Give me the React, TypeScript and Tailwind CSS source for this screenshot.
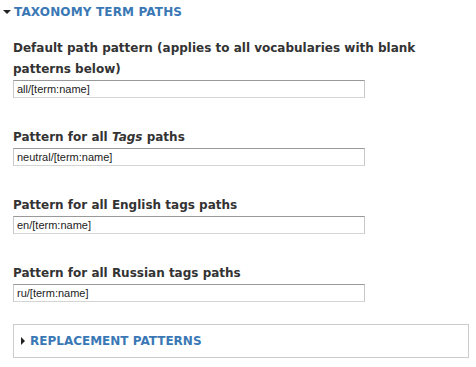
import React from 'react';

const fields = [
  { id: 'default', label: <>Default path pattern (applies to all vocabularies with blank patterns below)</>, value: 'all/[term:name]' },
  { id: 'tags', label: <>Pattern for all <em>Tags</em> paths</>, value: 'neutral/[term:name]' },
  { id: 'en', label: <>Pattern for all English tags paths</>, value: 'en/[term:name]' },
  { id: 'ru', label: <>Pattern for all Russian tags paths</>, value: 'ru/[term:name]' },
];

export default function App() {
  return (
    <div className="w-[476px] h-[367px] bg-white overflow-hidden font-['DejaVu_Sans',sans-serif]">
      {/* Legend */}
      <div className="flex items-center h-[24px] pl-[3px]">
        <span className="w-0 h-0 border-l-[4px] border-r-[4px] border-t-[4px] border-l-transparent border-r-transparent border-t-[#222] mr-[3px]" />
        <span className="text-[12px] font-bold text-[#3a78b5] tracking-[0.15px]">TAXONOMY TERM PATHS</span>
      </div>

      <div className="pl-[13px] pt-[14px]">
        {fields.map((f, i) => (
          <div key={f.id} className={i > 0 ? 'mt-[29px]' : ''}>
            <label className="block w-[420px] text-[12px] leading-[21px] font-bold text-[#333]">{f.label}</label>
            <input
              readOnly
              value={f.value}
              className="block w-[352px] h-[18px] px-[3px] text-[11px] text-[#222] font-['Liberation_Sans',sans-serif] border border-t-[#999] border-x-[#c8c8c8] border-b-[#d4d4d4] outline-none"
            />
          </div>
        ))}

        {/* Replacement patterns fieldset */}
        <div className="mt-[22px] mr-[7px] h-[34px] border border-[#ccc] flex items-center pl-[7px]">
          <span className="w-0 h-0 border-t-[4px] border-b-[4px] border-l-[4px] border-t-transparent border-b-transparent border-l-[#222] mr-[5px]" />
          <span className="text-[12px] font-bold text-[#3a78b5]">REPLACEMENT PATTERNS</span>
        </div>
      </div>
    </div>
  );
}
